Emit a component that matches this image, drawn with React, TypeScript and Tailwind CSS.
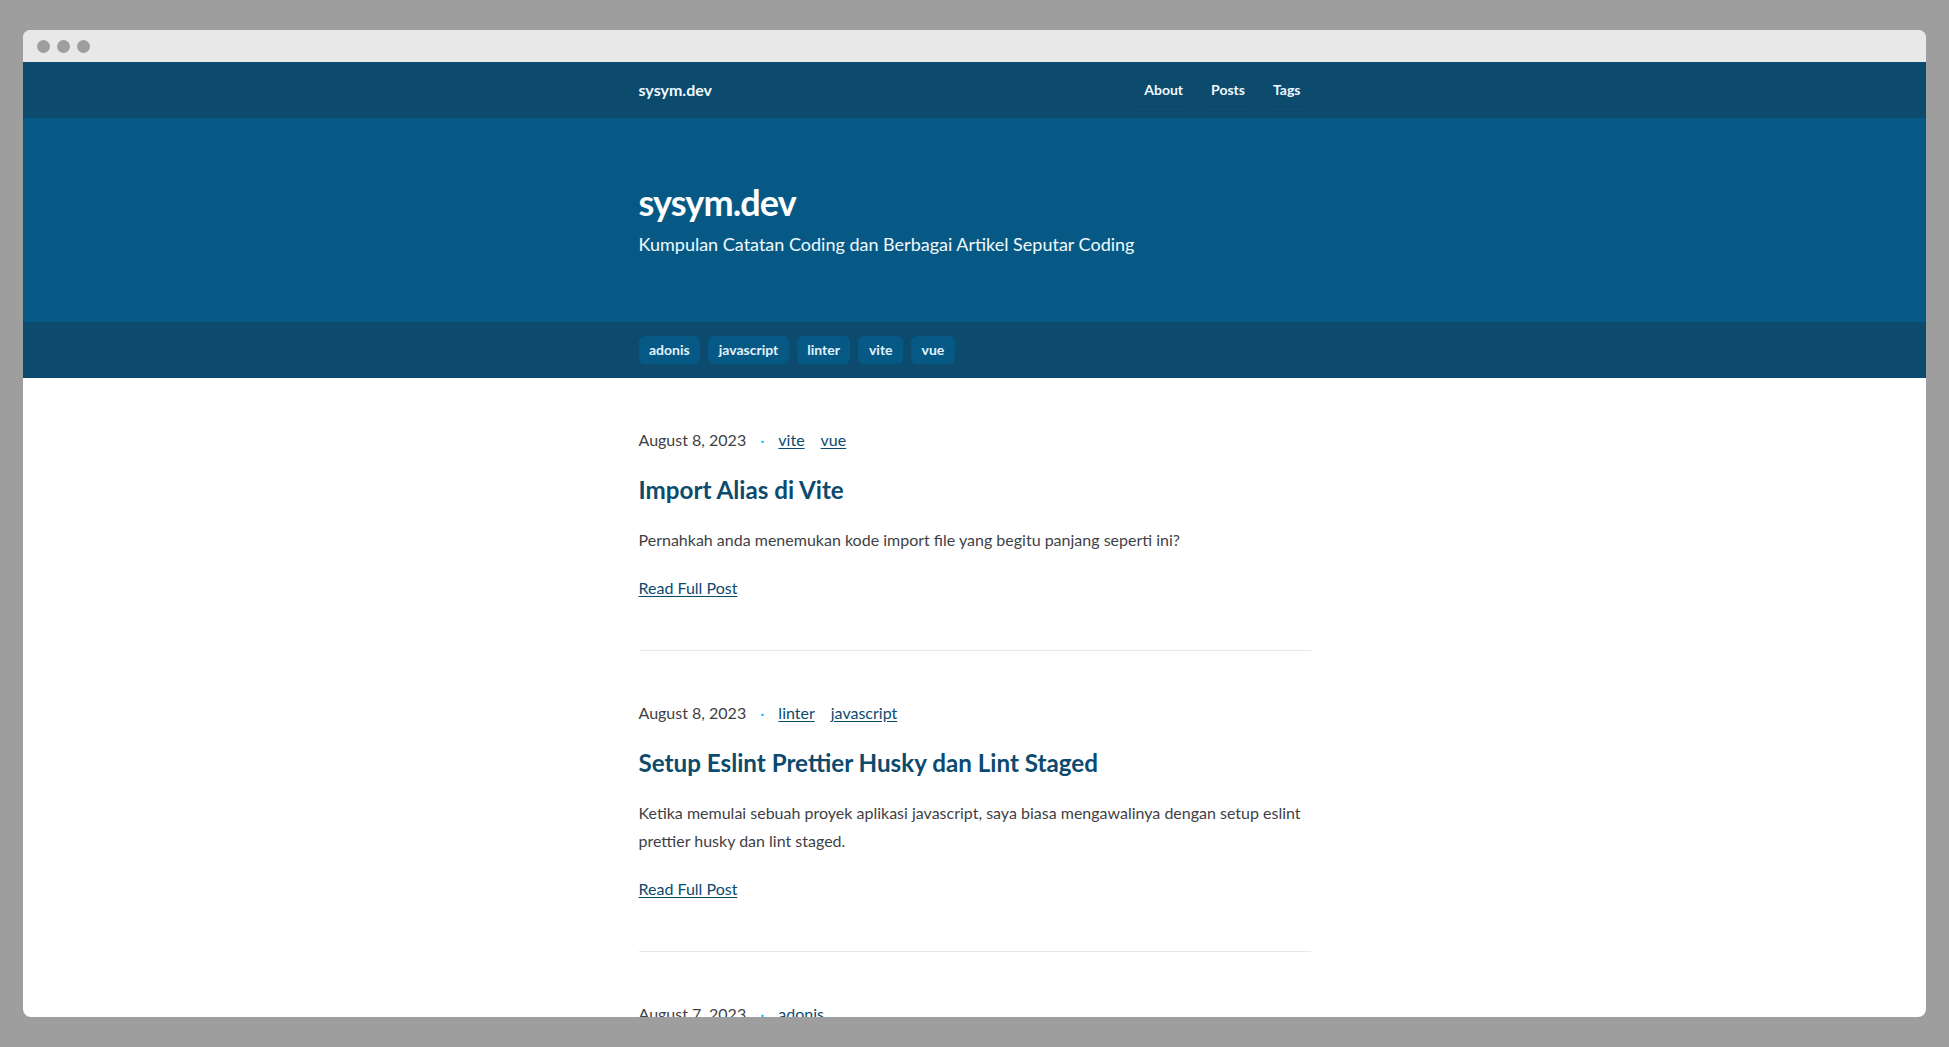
const tags = ["adonis", "javascript", "linter", "vite", "vue"];

interface Post {
  date: string;
  tags: string[];
  title: string;
  excerpt: string;
}

const posts: Post[] = [
  {
    date: "August 8, 2023",
    tags: ["vite", "vue"],
    title: "Import Alias di Vite",
    excerpt: "Pernahkah anda menemukan kode import file yang begitu panjang seperti ini?",
  },
  {
    date: "August 8, 2023",
    tags: ["linter", "javascript"],
    title: "Setup Eslint Prettier Husky dan Lint Staged",
    excerpt:
      "Ketika memulai sebuah proyek aplikasi javascript, saya biasa mengawalinya dengan setup eslint prettier husky dan lint staged.",
  },
  {
    date: "August 7, 2023",
    tags: ["adonis"],
    title: "Belajar Adonis",
    excerpt: "",
  },
];

function PostItem({ post }: { post: Post }) {
  return (
    <article className="pt-12 pb-12 border-b border-gray-200">
      <div className="flex items-center gap-4 text-base leading-7 text-[#3f3f46]">
        <span>{post.date}</span>
        <span className="-mx-[2px] text-sky-400">·</span>
        {post.tags.map((t) => (
          <a key={t} href="#" className="text-[#0c4a6e] underline underline-offset-2">
            {t}
          </a>
        ))}
      </div>
      <h2 className="mt-5 text-[24.2px] leading-8 font-bold text-[#0c4a6e]">{post.title}</h2>
      <p className="mt-5 text-base leading-7 text-[#3f3f46]">{post.excerpt}</p>
      <a href="#" className="mt-5 inline-block text-base leading-7 text-[#0c4a6e] underline underline-offset-2">
        Read Full Post
      </a>
    </article>
  );
}

export default function App() {
  return (
    <div className="min-h-screen bg-[#9e9e9e] px-[23px] pt-[30px] pb-[30px]" style={{ fontFamily: "Lato, 'Open Sans', sans-serif" }}>
      <div className="h-[987px] overflow-hidden rounded-lg bg-white flex flex-col">
        {/* Title bar */}
        <div className="h-8 shrink-0 bg-[#e8e8e8] flex items-center gap-[7px] pl-[14px]">
          <span className="w-[13px] h-[13px] rounded-full bg-[#9e9e9e]" />
          <span className="w-[13px] h-[13px] rounded-full bg-[#9e9e9e]" />
          <span className="w-[13px] h-[13px] rounded-full bg-[#9e9e9e]" />
        </div>

        {/* Nav */}
        <header className="h-14 shrink-0 bg-[#0c4a6e]">
          <div className="max-w-2xl mx-auto h-full flex items-center justify-between">
            <a href="#" className="text-base font-bold text-[#f0f9ff]">sysym.dev</a>
            <nav className="flex items-center gap-2">
              {["About", "Posts", "Tags"].map((n) => (
                <a key={n} href="#" className="px-2.5 py-1.5 rounded-md text-sm font-bold text-[#f0f9ff] shadow-[0_1px_2px_rgba(0,0,0,0.06)]">
                  {n}
                </a>
              ))}
            </nav>
          </div>
        </header>

        {/* Hero */}
        <section className="shrink-0 bg-[#075985] py-16">
          <div className="max-w-2xl mx-auto">
            <h1 className="text-4xl leading-10 font-bold tracking-tight text-white">sysym.dev</h1>
            <p className="mt-2 text-lg leading-7 text-[#f0f9ff]">Kumpulan Catatan Coding dan Berbagai Artikel Seputar Coding</p>
          </div>
        </section>

        {/* Tag bar */}
        <div className="shrink-0 bg-[#0c4a6e] py-3.5">
          <div className="max-w-2xl mx-auto flex gap-2">
            {tags.map((t) => (
              <a key={t} href="#" className="px-[10.5px] py-1 rounded-md bg-[#075985] text-sm leading-5 font-bold text-[#e0f2fe]">
                {t}
              </a>
            ))}
          </div>
        </div>

        {/* Posts */}
        <main className="max-w-2xl w-full mx-auto">
          {posts.map((p, i) => (
            <PostItem key={i} post={p} />
          ))}
        </main>
      </div>
    </div>
  );
}
